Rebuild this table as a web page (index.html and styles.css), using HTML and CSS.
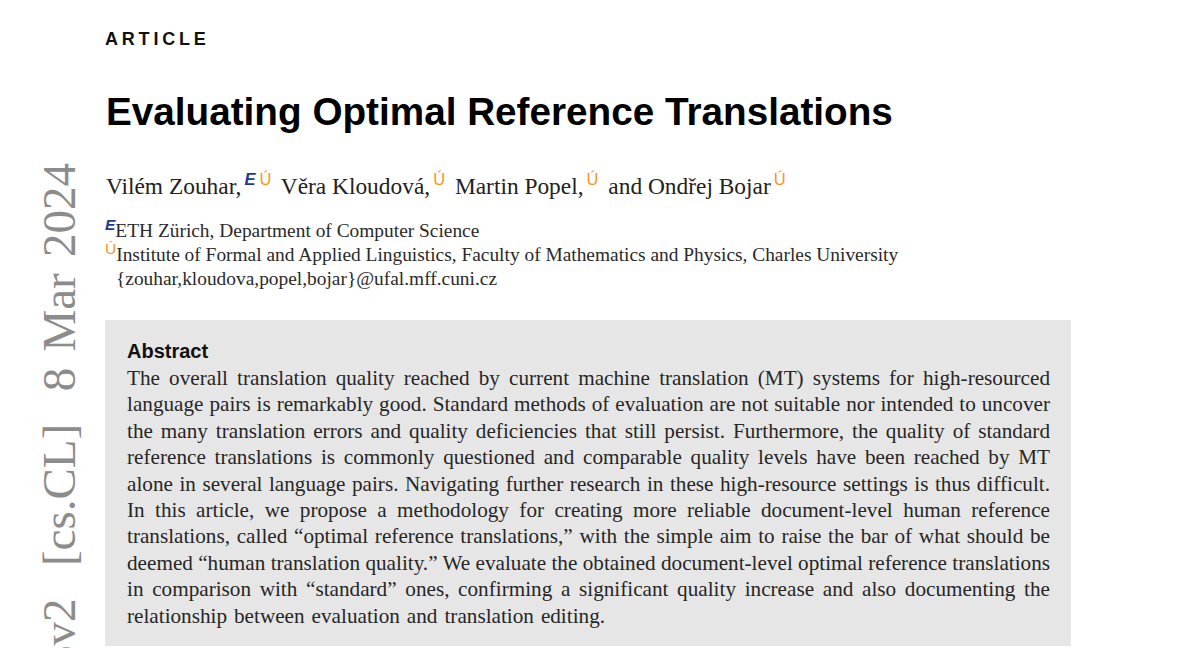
FILE: index.html
```html
<!DOCTYPE html>
<html lang="en">
<head>
<meta charset="utf-8">
<title>Evaluating Optimal Reference Translations</title>
<link rel="stylesheet" href="styles.css">
</head>
<body>
<div class="stamp">arXiv:2402.16578v2&nbsp;&nbsp;[cs.CL]&nbsp;&nbsp;8 Mar 2024</div>
<main class="page">
  <div class="kicker">ARTICLE</div>
  <h1 class="title">Evaluating Optimal Reference Translations</h1>
  <p class="authors">Vilém Zouhar,<sup class="mk"><span class="eth">E</span><span class="ufal">Ú</span></sup> Věra Kloudová,<sup class="mk"><span class="ufal">Ú</span></sup> Martin Popel,<sup class="mk"><span class="ufal">Ú</span></sup> and Ondřej Bojar<sup class="mk"><span class="ufal">Ú</span></sup></p>
  <div class="affils">
    <div class="affil"><sup class="mk"><span class="eth">E</span></sup>ETH Zürich, Department of Computer Science</div>
    <div class="affil"><sup class="mk"><span class="ufal">Ú</span></sup>Institute of Formal and Applied Linguistics, Faculty of Mathematics and Physics, Charles University</div>
    <div class="affil email">{zouhar,kloudova,popel,bojar}@ufal.mff.cuni.cz</div>
  </div>
  <section class="abstract">
    <h2 class="abs-head">Abstract</h2>
    <div class="abs-body">
      <span class="ln">The overall translation quality reached by current machine translation (MT) systems for high-resourced</span>
      <span class="ln">language pairs is remarkably good. Standard methods of evaluation are not suitable nor intended to uncover</span>
      <span class="ln">the many translation errors and quality deficiencies that still persist. Furthermore, the quality of standard</span>
      <span class="ln">reference translations is commonly questioned and comparable quality levels have been reached by MT</span>
      <span class="ln">alone in several language pairs. Navigating further research in these high-resource settings is thus difficult.</span>
      <span class="ln">In this article, we propose a methodology for creating more reliable document-level human reference</span>
      <span class="ln">translations, called “optimal reference translations,” with the simple aim to raise the bar of what should be</span>
      <span class="ln">deemed “human translation quality.” We evaluate the obtained document-level optimal reference translations</span>
      <span class="ln">in comparison with “standard” ones, confirming a significant quality increase and also documenting the</span>
      <span class="ln last">relationship between evaluation and translation editing.</span>
    </div>
  </section>
</main>
</body>
</html>
```
FILE: styles.css
```css
html, body {
  margin: 0;
  padding: 0;
  background: #ffffff;
  overflow: hidden;
  width: 1200px;
  height: 648px;
}

body {
  position: relative;
  font-family: "Liberation Serif", "Times New Roman", serif;
  color: #222222;
}

.stamp {
  position: absolute;
  left: 35px;
  top: 163px;
  writing-mode: vertical-rl;
  transform: rotate(180deg);
  font-family: "Liberation Serif", "Times New Roman", serif;
  font-size: 47px;
  line-height: 48px;
  word-spacing: 4.5px;
  color: #8c8c8c;
  white-space: nowrap;
}

.page {
  padding: 29px 0 0 105px;
  width: 966px;
}

.kicker {
  font-family: "Liberation Sans", Arial, sans-serif;
  font-weight: bold;
  font-size: 18px;
  line-height: 20px;
  letter-spacing: 3.8px;
  color: #111111;
}

.title {
  margin: 41px 0 0 1px;
  font-family: "Liberation Sans", Arial, sans-serif;
  font-weight: bold;
  font-size: 38.7px;
  line-height: 44px;
  color: #000000;
}

.authors {
  margin: 38px 0 0 1px;
  font-size: 23.4px;
  line-height: 28px;
  color: #222222;
}

.mk {
  font-size: 0;
  line-height: 0;
  vertical-align: 9px;
}

.mk .eth,
.mk .ufal {
  font-family: "Liberation Sans", Arial, sans-serif;
  font-size: 16.5px;
  line-height: 0;
}

.eth {
  color: #1f3a93;
  font-weight: bold;
  font-style: italic;
}

.ufal {
  color: #f7941d;
}

.authors .mk {
  margin-left: 3px;
  margin-right: 4px;
}

.authors .mk .eth + .ufal {
  margin-left: 4px;
}

.affils {
  margin-top: 19px;
  font-size: 19.4px;
  line-height: 24px;
  color: #2a2a2a;
}

.affil .mk {
  vertical-align: 7px;
}

.affil .mk .eth,
.affil .mk .ufal {
  font-size: 15.5px;
}

.email {
  padding-left: 11px;
}

.abstract {
  margin-top: 29px;
  background: #e6e6e6;
  padding: 19px 21px 17px 22px;
}

.abs-head {
  margin: 0;
  font-family: "Liberation Sans", Arial, sans-serif;
  font-weight: bold;
  font-size: 20px;
  line-height: 24px;
  color: #111111;
}

.abs-body {
  margin-top: 2px;
  font-size: 21.2px;
  line-height: 26.4px;
  color: #262626;
}

.ln {
  display: block;
  text-align: justify;
  text-align-last: justify;
  white-space: nowrap;
}

.ln.last {
  text-align-last: left;
  word-spacing: 1.7px;
}
```
